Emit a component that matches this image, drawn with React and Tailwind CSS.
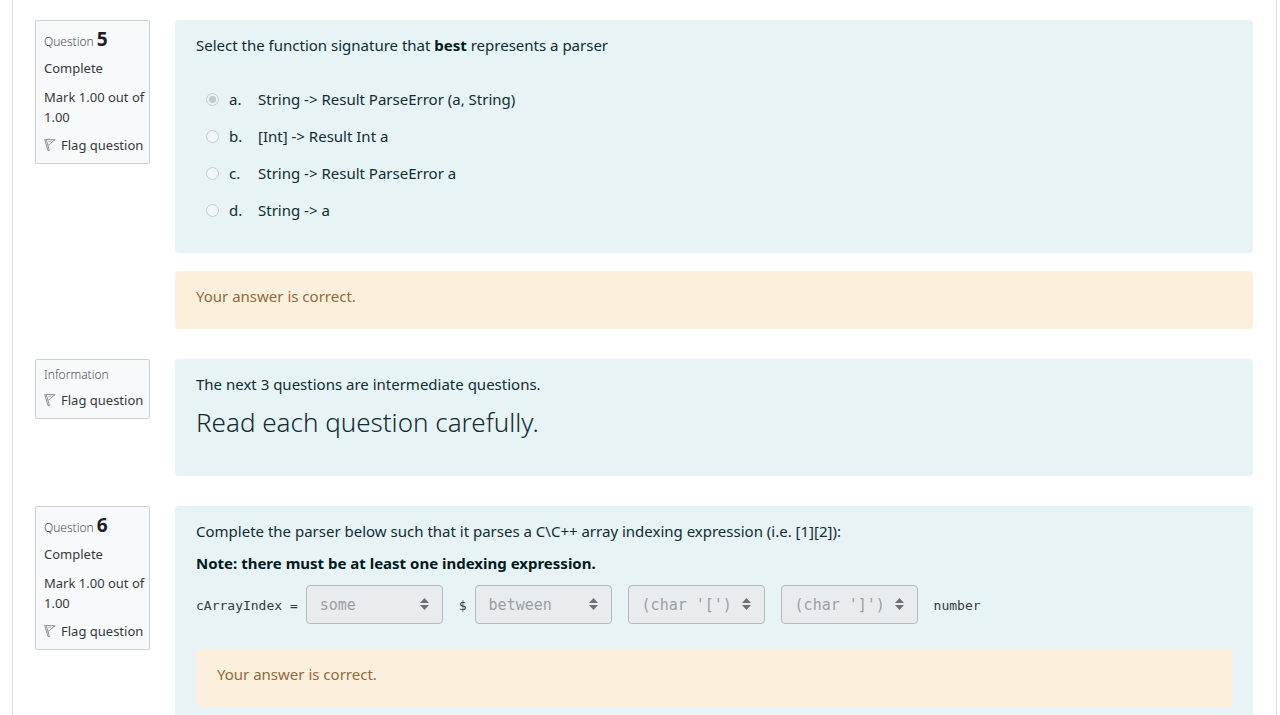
import React from "react";

function FlagIcon() {
  return (
    <svg width="12" height="14" viewBox="0 0 12 14" fill="none" stroke="#70787d" strokeWidth="0.8" strokeLinejoin="round" aria-hidden="true">
      <path d="M0.7 1.5 4 12.6H5.4L2.4 2.2Z" />
      <path d="M2.2 1.4 11.2 1.8C8.6 2.8 7.4 5.6 4.2 7.2" />
      <path d="M4.2 3.6 7.4 3" strokeWidth="0.5" />
    </svg>
  );
}

function InfoBox({ title, number, status, mark }) {
  return (
    <aside className="w-[115px] shrink-0 rounded-xs border border-[#cad0d7] bg-[#f8f9fa] pr-1 pl-2 text-[13px] leading-5 text-[#343a40]">
      {number ? (
        <h3 className="pt-[6px] text-xs leading-6 font-light text-[#4a5258]">
          {title} <span className="text-[19px] font-bold text-[#1d2125]">{number}</span>
        </h3>
      ) : (
        <h3 className="pt-[5px] text-xs leading-5 font-light text-[#4a5258]">{title}</h3>
      )}
      {status && <div className="mt-1">{status}</div>}
      {mark && <div className="mt-[9px] mb-[8px]">{mark}</div>}
      <button type="button" className={mark ? "mb-2 flex items-center gap-[5px] whitespace-nowrap" : "mt-[5px] mb-2 flex items-center gap-[5px] whitespace-nowrap"}>
        <FlagIcon />
        Flag question
      </button>
    </aside>
  );
}

function Feedback() {
  return (
    <div className="rounded bg-[#fcefdc] px-[21px] pt-[13px] pb-[21px] text-[#8f6b3d]">
      Your answer is correct.
    </div>
  );
}

function Question({ info, children }) {
  return (
    <section className="flex items-start gap-[25px]">
      <InfoBox {...info} />
      <div className="min-w-0 grow">{children}</div>
    </section>
  );
}

const options = [
  ["a", "String -> Result ParseError (a, String)"],
  ["b", "[Int] -> Result Int a"],
  ["c", "String -> Result ParseError a"],
  ["d", "String -> a"],
];

function Option({ letter, text }) {
  return (
    <label className="flex h-6 items-center">
      <input
        type="radio"
        name="signature"
        disabled
        defaultChecked={letter === "a"}
        className="mr-[10px] size-[13px] shrink-0 appearance-none rounded-full border border-[#c8cbcc] bg-[#f3f6f6] bg-clip-content checked:bg-[#c6c8c9] checked:p-[2px]"
      />
      <span className="w-[29px]">{letter}.</span>
      <span>{text}</span>
    </label>
  );
}

function Blank({ label, value }) {
  return (
    <span className="relative inline-flex items-baseline">
      <select
        aria-label={label}
        disabled
        className="h-[39px] w-[137px] appearance-none rounded border border-[#b4babf] bg-[#e9ecef] pl-[13px] text-[15px] text-[#999fa3] opacity-100"
      >
        <option>{value}</option>
      </select>
      <svg width="9" height="12" viewBox="0 0 9 12" fill="#6b7176" aria-hidden="true" className="pointer-events-none absolute top-[13px] right-[14px]">
        <path d="M4.5 0 9 5H0ZM0 7H9L4.5 12Z" />
      </svg>
    </span>
  );
}

export default function App() {
  return (
    <div className="h-screen overflow-hidden bg-white pr-[3px] pl-3 font-['Noto_Sans',sans-serif] text-[15px] leading-6 text-[#0f2d33]">
      <main className="flex min-h-full flex-col gap-[30px] border-x border-[#dee2e6] pt-5 pr-[23px] pl-[22px]">
        <Question info={{ title: "Question", number: 5, status: "Complete", mark: "Mark 1.00 out of 1.00" }}>
          <div className="rounded bg-[#e7f3f5] px-[21px] pt-[13px] pb-[31px]">
            <p>
              Select the function signature that <b className="text-[#001a1e]">best</b> represents a parser
            </p>
            <div className="mt-[30px] flex flex-col gap-[13px] pl-[10px]">
              {options.map(([letter, text]) => (
                <Option key={letter} letter={letter} text={text} />
              ))}
            </div>
          </div>
          <div className="mt-[18px]">
            <Feedback />
          </div>
        </Question>

        <Question info={{ title: "Information" }}>
          <div className="rounded bg-[#e7f3f5] px-[21px] pt-[13px] pb-[36px]">
            <p>The next 3 questions are intermediate questions.</p>
            <h2 className="mt-2 text-[26px] leading-9 font-light">Read each question carefully.</h2>
          </div>
        </Question>

        <Question info={{ title: "Question", number: 6, status: "Complete", mark: "Mark 1.00 out of 1.00" }}>
          <div className="rounded bg-[#e7f3f5] px-[21px] pt-[13px] pb-8">
            <p>Complete the parser below such that it parses a C\C++ array indexing expression (i.e. [1][2]):</p>
            <p className="mt-2 font-bold text-[#001a1e]">Note: there must be at least one indexing expression.</p>
            <div className="mt-[10px] mb-[25px] flex items-baseline font-['DejaVu_Sans_Mono',monospace] text-[13px] text-[#343a40]">
              <span className="mr-2">cArrayIndex =</span>
              <Blank label="Blank 1" value="some" />
              <span className="mr-2 ml-4">$</span>
              <span className="flex items-baseline gap-4">
                <Blank label="Blank 2" value="between" />
                <Blank label="Blank 3" value="(char '[')" />
                <Blank label="Blank 4" value="(char ']')" />
                <span>number</span>
              </span>
            </div>
            <Feedback />
          </div>
        </Question>
      </main>
    </div>
  );
}
